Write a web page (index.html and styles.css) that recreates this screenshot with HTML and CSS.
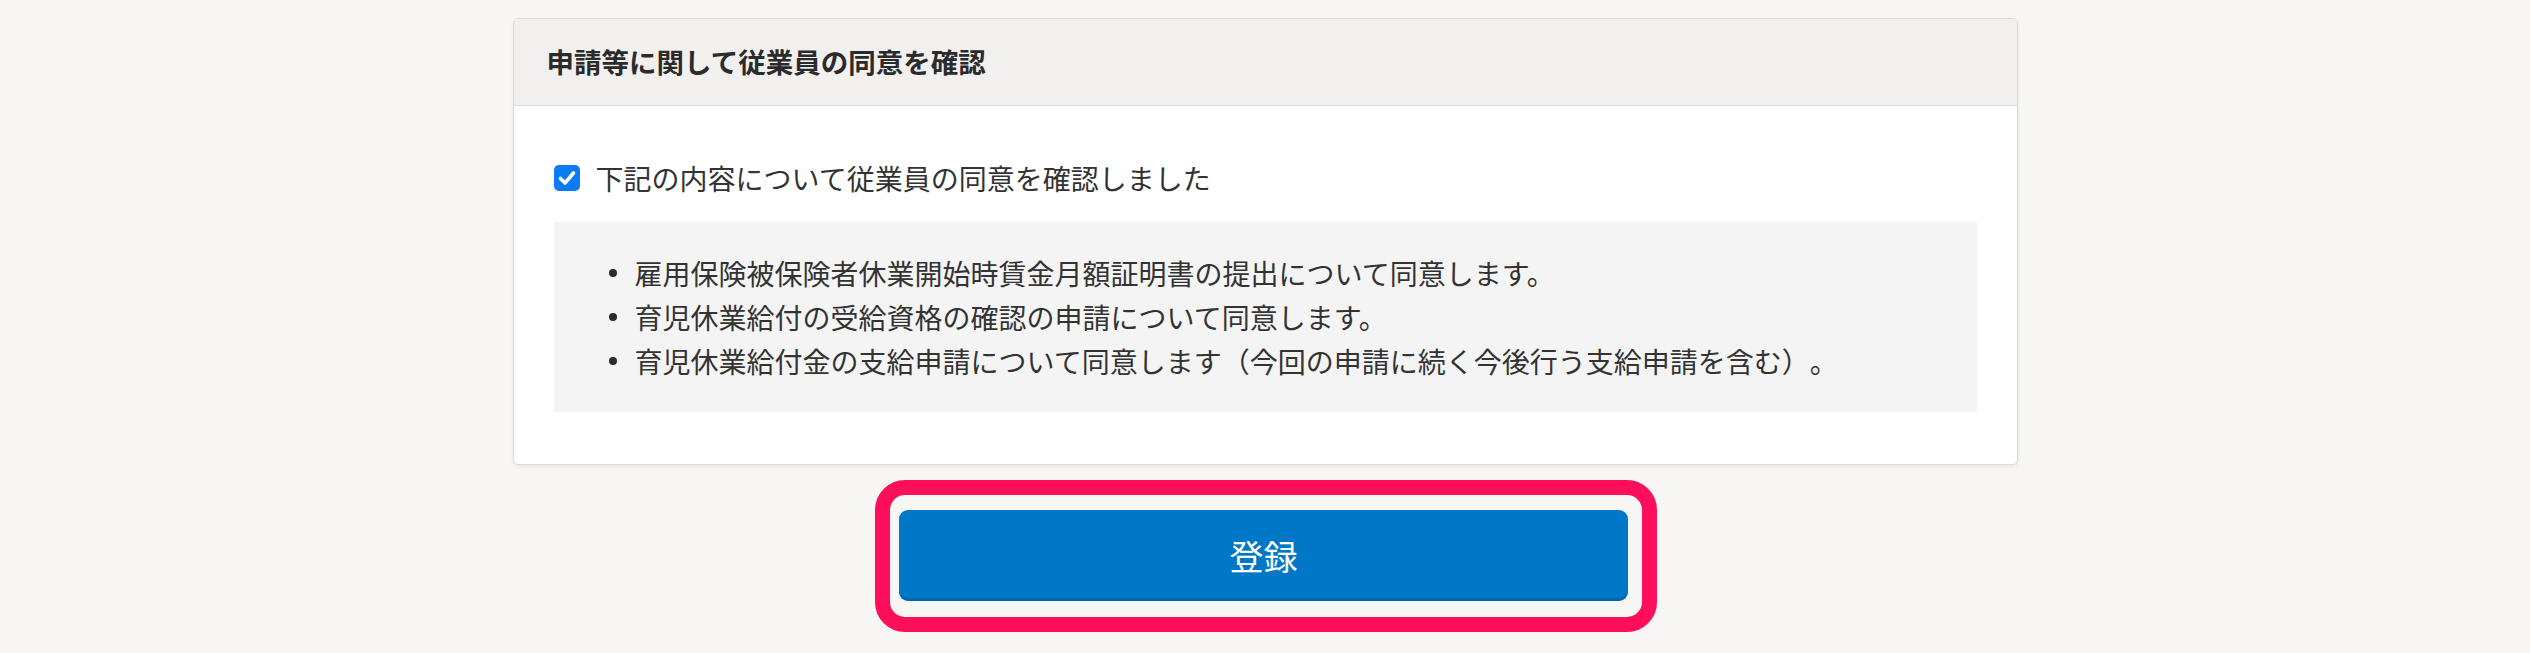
FILE: index.html
```html
<!DOCTYPE html>
<html lang="ja">
<head>
<meta charset="utf-8">
<title>同意確認</title>
<link rel="stylesheet" href="styles.css">
</head>
<body>
<main class="page">
  <section class="card">
    <header class="card-header">
      <h2 class="card-title">申請等に関して従業員の同意を確認</h2>
    </header>
    <div class="card-body">
      <label class="check-row">
        <span class="checkbox" aria-hidden="true">
          <svg viewBox="0 0 26 26" width="26" height="26"><path d="M6.5 13.5 L11 18 L19.5 8" fill="none" stroke="#fff" stroke-width="3.6" stroke-linecap="round" stroke-linejoin="round"/></svg>
        </span>
        <span class="check-label">下記の内容について従業員の同意を確認しました</span>
      </label>
      <div class="notice">
        <ul class="notice-list">
          <li>雇用保険被保険者休業開始時賃金月額証明書の提出について同意します。</li>
          <li>育児休業給付の受給資格の確認の申請について同意します。</li>
          <li>育児休業給付金の支給申請について同意します（今回の申請に続く今後行う支給申請を含む）。</li>
        </ul>
      </div>
    </div>
  </section>
  <div class="actions">
    <div class="highlight">
      <button class="submit" type="button">登録</button>
    </div>
  </div>
</main>
</body>
</html>
```

FILE: styles.css
```css
* { box-sizing: border-box; }

html, body {
  margin: 0;
  padding: 0;
  background: #f7f6f4;
  font-family: "Noto Sans CJK JP", "Noto Sans", sans-serif;
  color: #333333;
  text-spacing-trim: space-all;
}

.page {
  display: flex;
  flex-direction: column;
  align-items: center;
  padding-top: 18px;
}

.card {
  width: 1505px;
  background: #ffffff;
  border: 1px solid #dcdbd9;
  border-radius: 5px;
  box-shadow: 0 2px 4px rgba(0, 0, 0, 0.06);
  overflow: hidden;
}

.card-header {
  height: 87px;
  background: #f1f0ee;
  border-bottom: 1px solid #dcdbd9;
  display: flex;
  align-items: center;
  padding: 0 33px;
}

.card-title {
  margin: 0;
  font-size: 27.5px;
  font-weight: 700;
  color: #2b2b2b;
  line-height: 1;
}

.card-body {
  padding: 50px 40px 52px;
}

.check-row {
  display: flex;
  align-items: center;
  height: 44px;
  gap: 16px;
}

.checkbox {
  flex: none;
  width: 26px;
  height: 26px;
  border-radius: 5px;
  background: #0b7cf4;
  display: flex;
}

.check-label {
  font-size: 28px;
  line-height: 44px;
  color: #333333;
}

.notice {
  margin-top: 22px;
  background: #f4f4f4;
  padding: 29px 40px 29px 55px;
}

.notice-list {
  list-style: none;
  margin: 0;
  padding: 0;
}

.notice-list li {
  display: flex;
  align-items: center;
  font-size: 28px;
  line-height: 44px;
  color: #333333;
}

.notice-list li::before {
  content: "";
  flex: none;
  width: 8px;
  height: 8px;
  border-radius: 50%;
  background: #2b2b2b;
  margin-right: 18px;
}

.actions {
  margin-top: 15px;
  display: flex;
  justify-content: center;
}

.highlight {
  border: 15px solid #fe0f5b;
  border-radius: 30px;
  padding: 15px 14px 16px 9px;
  margin-left: 2px;
}

.submit {
  display: flex;
  align-items: center;
  justify-content: center;
  width: 729px;
  height: 91px;
  border: none;
  border-radius: 9px;
  background: #0077c7;
  box-shadow: inset 0 -3px 0 rgba(0, 0, 0, 0.12);
  color: #ffffff;
  font-family: "Noto Sans CJK JP", "Noto Sans", sans-serif;
  font-size: 34px;
  line-height: 1;
  padding: 0;
}
```
